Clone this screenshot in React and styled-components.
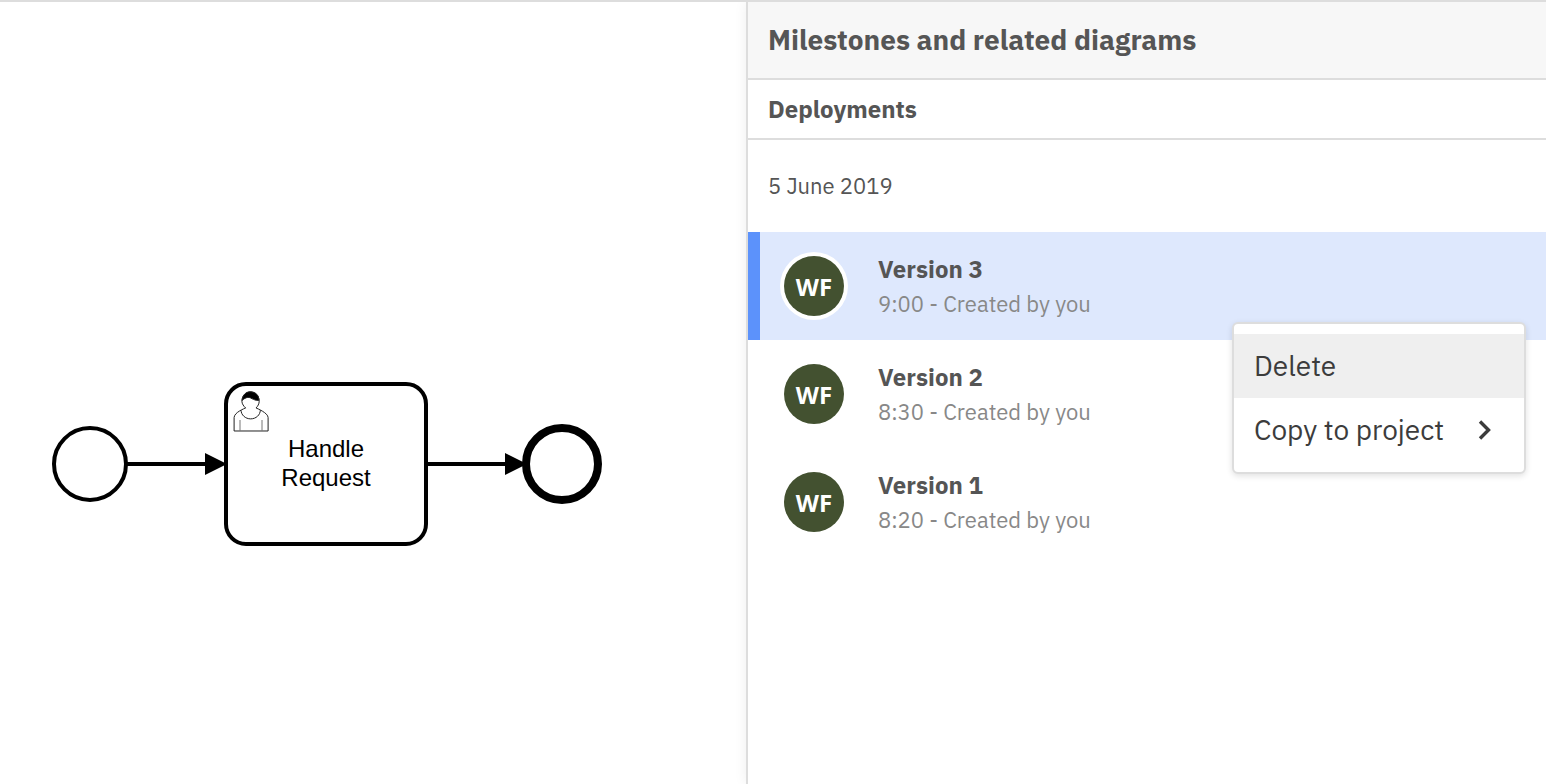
import React from "react";
import styled, { createGlobalStyle, css } from "styled-components";

const GlobalStyle = createGlobalStyle`
  *, *::before, *::after { box-sizing: border-box; }
  body {
    margin: 0;
    background: #fff;
    color: #555;
    font-family: "IBM Plex Sans", Roboto, "Liberation Sans", sans-serif;
  }
`;

const Page = styled.div`
  display: grid;
  grid-template-columns: minmax(0, 746fr) minmax(0, 800fr);
  min-height: 100vh;
  border-top: 2px solid #ddd;
`;

const Canvas = styled.main`
  padding: 378px 0 0 50px;
  overflow: hidden;
`;

const Diagram = styled.svg`
  display: block;
  font-family: "Liberation Sans", Arial, sans-serif;
  font-size: 24px;
`;

const Panel = styled.aside`
  border-left: 2px solid #ddd;
  background: #fff;
  box-shadow: 0 0 12px rgba(0, 0, 0, 0.07);
  clip-path: inset(0 0 0 -16px);
`;

const PanelTitle = styled.h1`
  margin: 0;
  padding: 18px 20px;
  border-bottom: 2px solid #ddd;
  background: #f7f7f7;
  font-size: 28px;
  line-height: 40px;
  font-weight: 700;
`;

const SectionTitle = styled.h2`
  margin: 0;
  padding: 12px 20px;
  border-bottom: 2px solid #ddd;
  font-size: 24px;
  line-height: 34px;
  font-weight: 700;
`;

const DateLabel = styled.h3`
  margin: 0;
  padding: 28px 20px;
  font-size: 22px;
  line-height: 36px;
  font-weight: 400;
`;

const VersionList = styled.ul`
  margin: 0;
  padding: 0;
  list-style: none;
`;

const VersionItem = styled.li`
  position: relative;
`;

const VersionButton = styled.button`
  display: flex;
  align-items: center;
  gap: 34px;
  width: 100%;
  height: 108px;
  padding: 0 24px;
  border: 0;
  border-left: 12px solid transparent;
  background: transparent;
  color: inherit;
  font: inherit;
  text-align: left;
  cursor: pointer;
  ${({ $selected }) =>
    $selected &&
    css`
      border-left-color: #5c92fb;
      background: #dee8fd;
    `}
`;

const Avatar = styled.span`
  display: grid;
  place-items: center;
  flex: none;
  width: 60px;
  height: 60px;
  padding-top: 2px;
  border-radius: 50%;
  background: #435130;
  box-shadow: 0 0 0 4px #fff;
  color: #fff;
  font-family: "Open Sans", sans-serif;
  font-size: 24px;
  line-height: 34px;
  font-weight: 700;
`;

const VersionText = styled.span`
  display: flex;
  flex-direction: column;
`;

const VersionName = styled.span`
  font-size: 24px;
  line-height: 36px;
  font-weight: 700;
`;

const VersionMeta = styled.span`
  color: #888;
  font-size: 22px;
  line-height: 34px;
`;

const Menu = styled.div`
  position: absolute;
  z-index: 1;
  top: 90px;
  right: 20px;
  width: 294px;
  padding: 10px 0;
  border: 2px solid #ddd;
  border-radius: 6px;
  background: #fff;
  box-shadow: 0 2px 6px rgba(0, 0, 0, 0.12);
`;

const MenuItem = styled.button`
  display: flex;
  align-items: center;
  justify-content: space-between;
  width: 100%;
  height: 64px;
  padding: 0 32px 0 20px;
  border: 0;
  background: ${({ $active }) => ($active ? "#efefef" : "transparent")};
  color: #3c3c3c;
  font: inherit;
  font-size: 28px;
  line-height: 40px;
  text-align: left;
  cursor: pointer;
`;

const versions = [
  { name: "Version 3", time: "9:00" },
  { name: "Version 2", time: "8:30" },
  { name: "Version 1", time: "8:20" },
];

function ProcessDiagram() {
  return (
    <Diagram width="554" height="168" viewBox="0 0 554 168" role="img" aria-label="Process diagram">
      <g fill="none" stroke="#000" strokeWidth="4">
        <circle cx="40" cy="84" r="36" />
        <path d="M76 84H170M376 84H470" />
        <rect x="176" y="4" width="200" height="160" rx="20" fill="#fff" />
        <circle cx="512" cy="84" r="36" strokeWidth="8" />
      </g>
      <path d="M155 73 177 84 155 95ZM455 73 477 84 455 95Z" />
      <g transform="translate(176 4) scale(2)" fill="#fff" stroke="#222" strokeWidth="0.5">
        <path d="m 15,12 c 0.909,-0.845 1.594,-2.049 1.594,-3.385 0,-2.554 -1.805,-4.622 -4.357,-4.622 -2.552,0 -4.288,2.068 -4.288,4.622 0,1.348 0.974,2.562 1.896,3.405 -0.529,0.187 -5.669,2.097 -5.794,4.756 v 6.718 h 17 v -6.718 c 0,-2.298 -5.528,-4.595 -6.051,-4.776z" />
        <path stroke="#777" d="M7,18v5.5M18,18v5.5" />
        <path d="m 17.162,13.009 c 0,2.447 -2.158,4.431 -4.821,4.431 -2.665,0 -4.822,-1.981 -4.822,-4.431" />
        <path
          fill="#000"
          d="m 8.1,8.2 c 0,0 2.251,-2.358 4.274,-1.177 2.024,1.181 4.221,1.537 4.124,0.965 -0.098,-0.57 -0.117,-3.791 -4.191,-4.136 -3.572,0.001 -4.208,3.367 -4.207,4.348 z"
        />
      </g>
      <text x="276" y="77" textAnchor="middle">Handle</text>
      <text x="276" y="106" textAnchor="middle">Request</text>
    </Diagram>
  );
}

function VersionMenu() {
  return (
    <Menu role="menu">
      <MenuItem type="button" role="menuitem" $active>Delete</MenuItem>
      <MenuItem type="button" role="menuitem">
        Copy to project
        <svg width="16" height="22" viewBox="0 0 16 22" fill="none" stroke="#3c3c3c" strokeWidth="3.4" aria-hidden="true">
          <path d="M4 2.5 12.5 11 4 19.5" />
        </svg>
      </MenuItem>
    </Menu>
  );
}

export default function App() {
  return (
    <>
      <GlobalStyle />
      <Page>
        <Canvas>
          <ProcessDiagram />
        </Canvas>
        <Panel>
          <PanelTitle>Milestones and related diagrams</PanelTitle>
          <SectionTitle>Deployments</SectionTitle>
          <DateLabel>5 June 2019</DateLabel>
          <VersionList>
            {versions.map(({ name, time }, index) => (
              <VersionItem key={name}>
                <VersionButton type="button" $selected={index === 0}>
                  <Avatar>WF</Avatar>
                  <VersionText>
                    <VersionName>{name}</VersionName>
                    <VersionMeta>{time} - Created by you</VersionMeta>
                  </VersionText>
                </VersionButton>
                {index === 0 && <VersionMenu />}
              </VersionItem>
            ))}
          </VersionList>
        </Panel>
      </Page>
    </>
  );
}
